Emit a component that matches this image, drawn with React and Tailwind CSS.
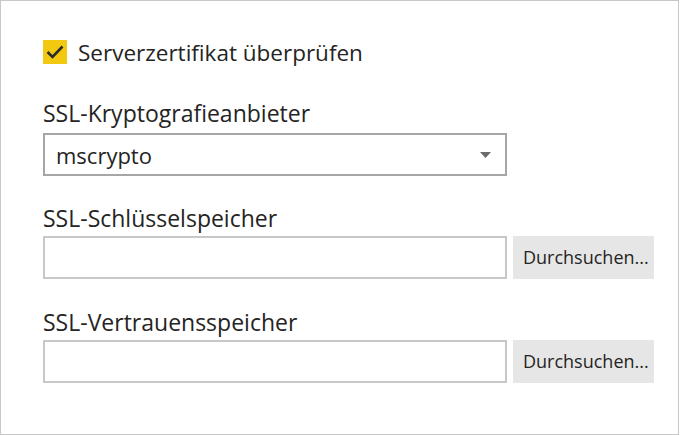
import React from "react";

// SSL settings panel: checkbox, provider select and two keystore pickers

function BrowseRow({ label, gap }) {
  return (
    <div className={gap}>
      <div className="text-[23px] leading-[30px] text-[#252423]">{label}</div>
      <div className="mt-[3px] flex items-stretch gap-[6px]">
        <div className="h-[43px] w-[464px] border-2 border-[#c8c8c8] bg-white" />
        <button className="h-[43px] w-[141px] bg-[#e6e6e6] pl-[10px] text-left text-[18px] text-[#252423]">
          Durchsuchen...
        </button>
      </div>
    </div>
  );
}

export default function App() {
  return (
    <div
      className="h-[435px] w-[679px] border border-[#c8c8c8] bg-white"
      style={{ fontFamily: '"Open Sans", "Noto Sans", sans-serif' }}
    >
      <div className="pl-[42px] pt-[39px]">
        <label className="flex items-start gap-[11px]">
          <span className="flex h-[24px] w-[24px] items-center justify-center bg-[#f2c811]">
            <svg width="24" height="24" viewBox="0 0 24 24" fill="none">
              <path d="M4.5 12 L9.5 17 L19.5 6.5" stroke="#2b2b2b" strokeWidth="2.6" />
            </svg>
          </span>
          <span className="-mt-[2px] text-[22.5px] leading-[30px] text-[#252423]">
            Serverzertifikat überprüfen
          </span>
        </label>

        <div className="mt-[30px] text-[23px] leading-[30px] text-[#252423]">SSL-Kryptografieanbieter</div>
        <div className="mt-[5px] flex h-[43px] w-[464px] items-center justify-between border-2 border-[#a6a6a6] pl-[11px] pr-[14px]">
          <span className="text-[22px] leading-[30px] text-[#252423]">mscrypto</span>
          <svg width="11" height="6" viewBox="0 0 11 6">
            <path d="M0 0 H11 L5.5 6 Z" fill="#6b6b6b" />
          </svg>
        </div>

        <BrowseRow label="SSL-Schlüsselspeicher" gap="mt-[27px]" />
        <BrowseRow label="SSL-Vertrauensspeicher" gap="mt-[28px]" />
      </div>
    </div>
  );
}
